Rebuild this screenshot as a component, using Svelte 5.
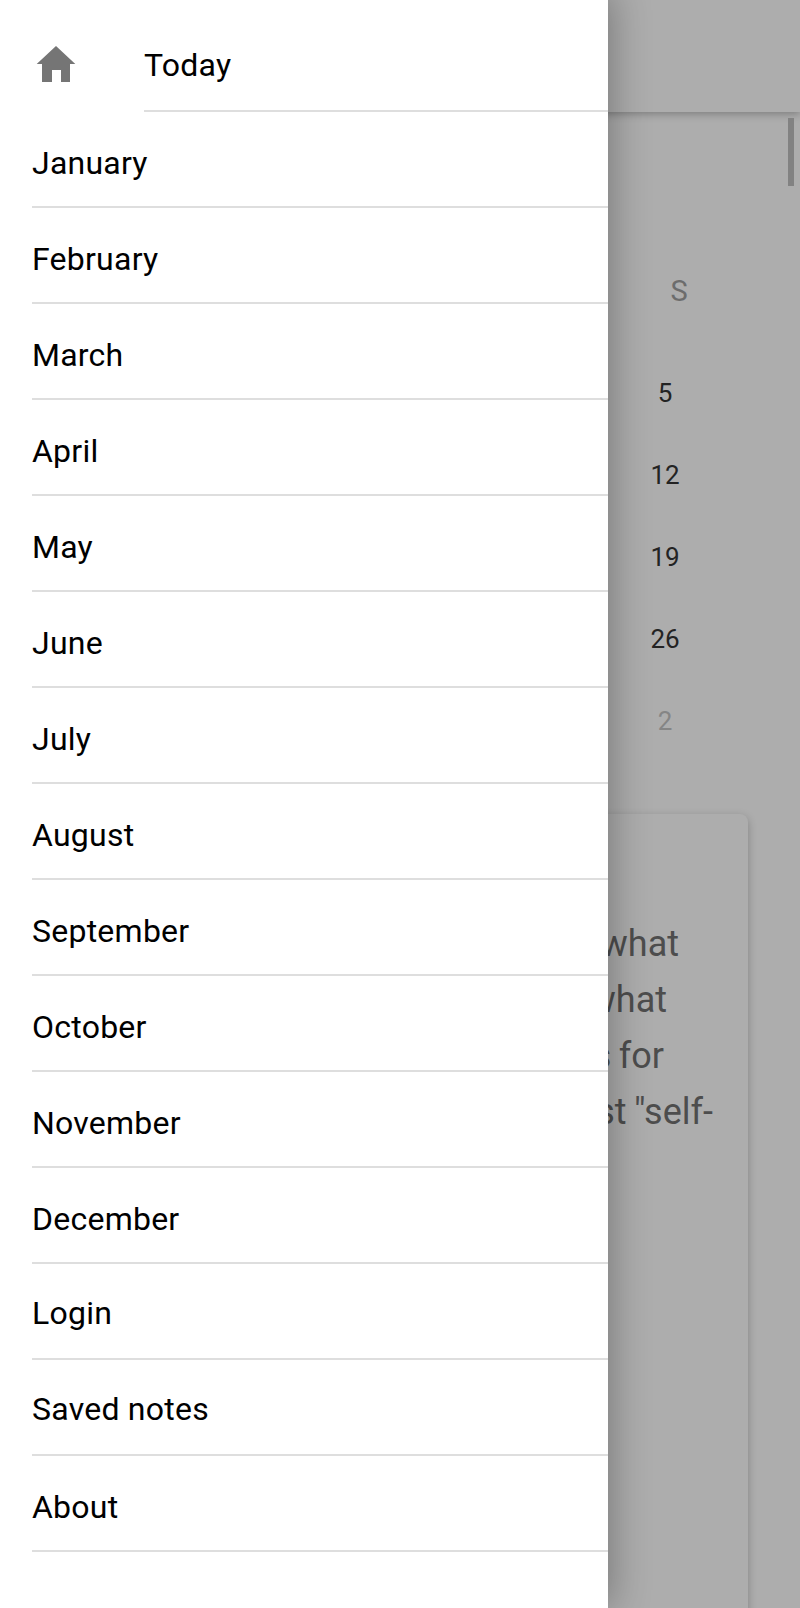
<script>
  const months = ['January', 'February', 'March', 'April', 'May', 'June', 'July', 'August', 'September', 'October', 'November', 'December'];
  const items = [
    ...months.map((label) => ({ label, raised: false })),
    { label: 'Login', raised: true },
    { label: 'Saved notes', raised: true },
    { label: 'About', raised: false }
  ];
  const dates = [
    { day: 5 },
    { day: 12 },
    { day: 19 },
    { day: 26 },
    { day: 2, muted: true }
  ];
  const lines = [
    { text: 'what', inset: 69 },
    { text: 'what', inset: 81 },
    { text: 's for', inset: 84 },
    { text: 'st "self-', inset: 35 }
  ];
</script>

<div class="screen">
  <header class="toolbar"></header>
  <main class="page">
    <section class="calendar">
      <div class="weekday">S</div>
      {#each dates as d}
        <div class="date" class:muted={d.muted}>{d.day}</div>
      {/each}
    </section>
    <article class="card">
      {#each lines as line}
        <p style="padding-right: {line.inset}px">{line.text}</p>
      {/each}
    </article>
  </main>
  <div class="scrollbar"></div>
  <nav class="drawer">
    <a class="item today">
      <svg viewBox="0 0 48 48" width="48" height="48"><path fill="#757575" d="M20 42v-12h9v12h9v-18h5.300L24 6 4.700 24H10v18z" /></svg>
      <span class="label raised">Today</span>
    </a>
    {#each items as item}
      <a class="item"><span class="label" class:raised={item.raised}>{item.label}</span></a>
    {/each}
  </nav>
</div>

<style>
  :global(body) { margin: 0; }
  .screen {
    position: relative;
    width: 800px;
    height: 1608px;
    overflow: hidden;
    background: #adadad;
    font-family: Roboto, sans-serif;
    display: flex;
    flex-direction: column;
  }
  .toolbar {
    flex: none;
    height: 112px;
    background: #adadad;
    box-shadow: 0 2px 8px rgba(0, 0, 0, 0.28);
  }
  .page { flex: 1; padding-top: 149px; }
  .calendar {
    height: 553px;
    display: flex;
    flex-direction: column;
    align-items: flex-end;
  }
  .weekday {
    width: 82px;
    height: 60px;
    margin-right: 80px;
    text-align: center;
    font-size: 29px;
    line-height: 60px;
    color: #6c6c6c;
    margin-bottom: 31px;
  }
  .date {
    width: 82px;
    height: 82px;
    margin-right: 94px;
    text-align: center;
    font-size: 26px;
    line-height: 82px;
    color: #232323;
  }
  .date.muted { color: #858585; }
  .card {
    width: 696px;
    height: 1000px;
    margin-left: 52px;
    padding-top: 102px;
    box-sizing: border-box;
    border-radius: 8px;
    background: #adadad;
    box-shadow: 0 3px 8px rgba(0, 0, 0, 0.25);
  }
  .card p {
    margin: 0;
    text-align: right;
    font-size: 36px;
    line-height: 56px;
    word-spacing: -1.5px;
    color: #4d4d4d;
  }
  .scrollbar {
    position: absolute;
    left: 788px;
    top: 118px;
    width: 6px;
    height: 68px;
    background: #828282;
  }
  .drawer {
    position: absolute;
    inset: 0 auto 0 0;
    width: 608px;
    box-sizing: border-box;
    padding: 16px 0 0 32px;
    background: #fff;
    box-shadow: 0 -4px 36px 4px rgba(0, 0, 0, 0.3);
    display: flex;
    flex-direction: column;
  }
  .item {
    flex: none;
    display: flex;
    align-items: center;
    height: 96px;
    color: #000;
    font-size: 32px;
    letter-spacing: 0.24px;
  }
  .item svg { flex: none; margin-right: 64px; }
  .label {
    flex: 1;
    height: 96px;
    box-sizing: border-box;
    padding-top: 8px;
    line-height: 86px;
    border-bottom: 2px solid #dedede;
  }
  .label.raised { padding-top: 6px; }
</style>
